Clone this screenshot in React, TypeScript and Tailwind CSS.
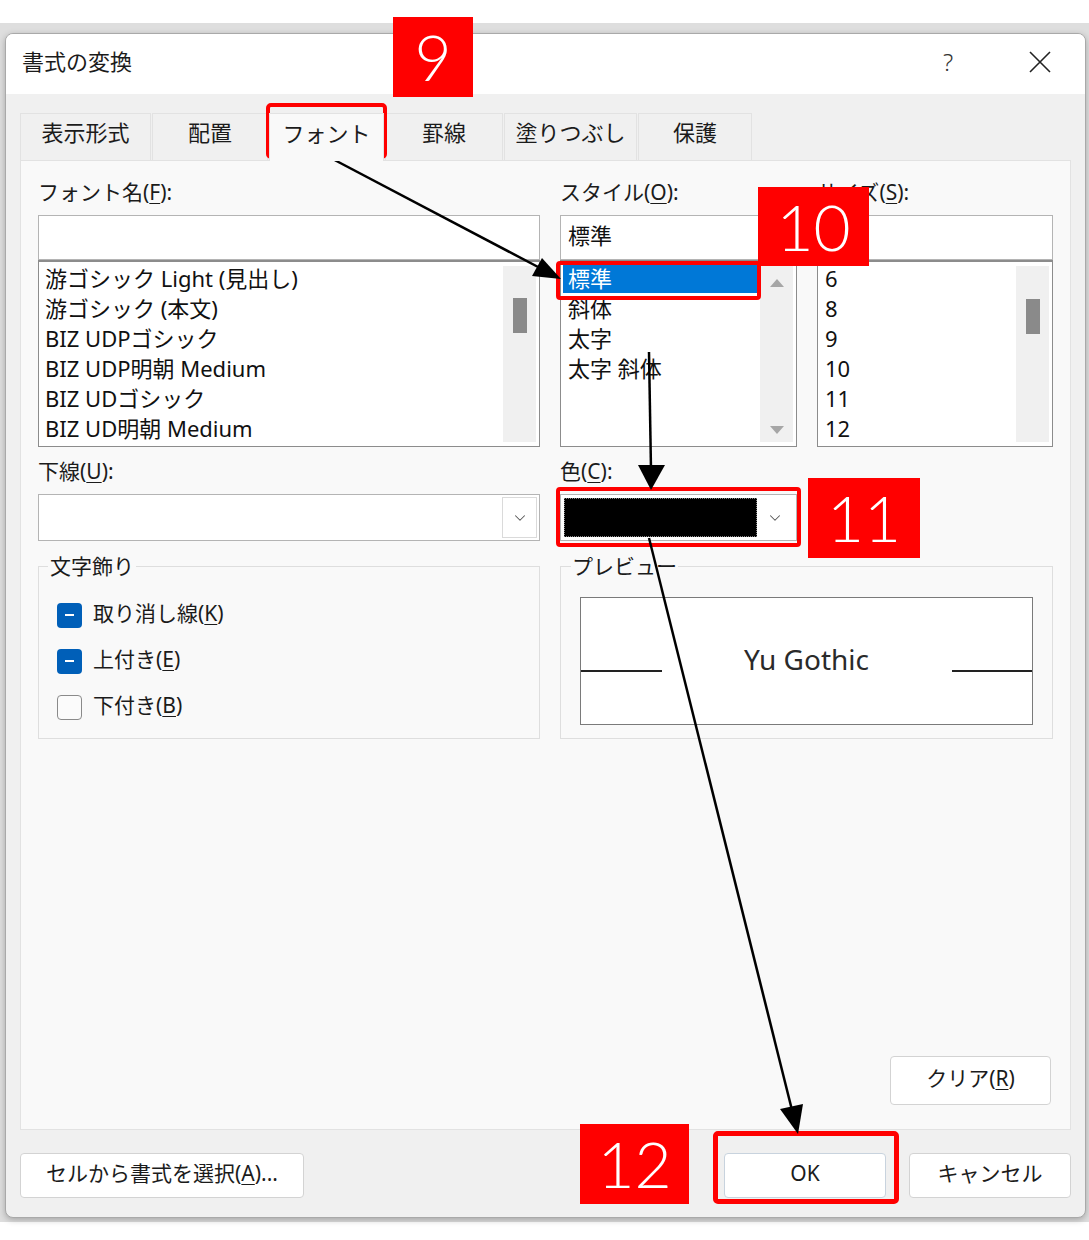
import { ChevronDown } from 'lucide-react';

const FONTS = ['游ゴシック Light (見出し)', '游ゴシック (本文)', 'BIZ UDPゴシック', 'BIZ UDP明朝 Medium', 'BIZ UDゴシック', 'BIZ UD明朝 Medium'];
const STYLES = ['標準', '斜体', '太字', '太字 斜体'];
const SIZES = ['6', '8', '9', '10', '11', '12'];
const TABS: { label: string; w: string; active?: boolean }[] = [
  { label: '表示形式', w: 'w-[131px]' },
  { label: '配置', w: 'w-[116px]' },
  { label: 'フォント', w: 'w-[115px]', active: true },
  { label: '罫線', w: 'w-[118px]' },
  { label: '塗りつぶし', w: 'w-[133px]' },
  { label: '保護', w: 'w-[114px]' },
];

function Key({ k }: { k: string }) {
  return <u className="underline decoration-1 underline-offset-[3px]">{k}</u>;
}

function Label({ text, k }: { text: string; k: string }) {
  return (
    <div className="h-[30px] text-[21px] leading-[28px] text-[#1b1b1b] whitespace-nowrap">
      {text}(<Key k={k} />):
    </div>
  );
}

function Scrollbar({ thumbTop, arrows }: { thumbTop?: string; arrows?: boolean }) {
  return (
    <div className="my-[4px] mr-[3px] flex w-[33px] flex-col items-center bg-[#f0f0f0]">
      {arrows ? (
        <>
          <svg width="16" height="10" viewBox="0 0 16 10" className="mt-[12px]">
            <path d="M1 9 L8 1 L15 9 Z" fill="#a6a6a6" />
          </svg>
          <svg width="16" height="10" viewBox="0 0 16 10" className="mt-auto mb-[7px]">
            <path d="M1 1 L8 9 L15 1 Z" fill="#a6a6a6" />
          </svg>
        </>
      ) : (
        <div className={`${thumbTop} h-[35px] w-[14px] bg-[#8a8a8a]`} />
      )}
    </div>
  );
}

function Checkbox({ checked }: { checked: boolean }) {
  return checked ? (
    <span className="flex size-[25px] items-center justify-center rounded-[4px] bg-[#005fb8]">
      <span className="h-[2px] w-[9px] bg-white" />
    </span>
  ) : (
    <span className="size-[25px] rounded-[4px] border border-[#8a8a8a] bg-[#fbfbfb]" />
  );
}

function Dialog() {
  return (
    <div className="flex h-[1185px] w-[1081px] flex-col overflow-hidden rounded-[8px] border border-[#a9a9a9] bg-[#f0f0f0] shadow-[0_2px_6px_rgba(0,0,0,0.25)]">
      {/* title bar */}
      <div className="flex h-[60px] items-center bg-white pb-[5px] pl-[16px] text-[22px] text-[#1b1b1b]">
        <span>書式の変換</span>
        <span className="ml-auto w-[40px] text-center text-[24px] font-light text-[#333]">?</span>
        <span className="ml-[49px] mr-[22px] flex w-[46px] justify-center">
          <svg width="22" height="22" viewBox="0 0 22 22">
            <path d="M1 1 L21 21 M21 1 L1 21" stroke="#222" strokeWidth="1.6" />
          </svg>
        </span>
      </div>

      <div className="flex flex-1 flex-col px-[14px] pt-[19px]">
        {/* tabs */}
        <div className="flex h-[47px] gap-[1px]">
          {TABS.map((t) => (
            <div
              key={t.label}
              className={`${t.w} relative flex items-center justify-center border border-b-0 border-[#e2e2e2] pb-[9px] text-[22px] text-[#1b1b1b] ${
                t.active ? 'z-10 -mb-px h-[48px] bg-[#f9f9f9]' : 'bg-[#f0f0f0]'
              }`}
            >
              {t.label}
            </div>
          ))}
        </div>

        {/* panel */}
        <div className="flex h-[970px] flex-col border border-[#e2e2e2] bg-[#f9f9f9] px-[17px] pb-[24px] pt-[17px]">
          <div className="grid grid-cols-[502px_237px_236px] gap-x-[20px]">
            {/* font name */}
            <div>
              <Label text="フォント名" k="F" />
              <div className="mt-[7px] h-[45px] border border-[#b4b4b4] bg-white" />
              <div className="flex h-[187px] border border-[#8c8c8c] border-t-2 bg-white">
                <div className="flex-1 pl-[6px] pt-[1px] text-[22px] leading-[30px] text-[#111]">
                  {FONTS.map((f) => (
                    <div key={f} className="h-[30px] whitespace-nowrap">
                      {f}
                    </div>
                  ))}
                </div>
                <Scrollbar thumbTop="mt-[32px]" />
              </div>
            </div>
            {/* style */}
            <div>
              <Label text="スタイル" k="O" />
              <div className="mt-[7px] flex h-[45px] items-center border border-[#b4b4b4] bg-white pb-[4px] pl-[7px] text-[22px] text-[#111]">
                標準
              </div>
              <div className="flex h-[187px] border border-[#8c8c8c] border-t-2 bg-white">
                <div className="flex-1 pl-[2px] pt-[1px] text-[22px] leading-[30px] text-[#111]">
                  {STYLES.map((s, i) => (
                    <div key={s} className={`h-[30px] pl-[5px] ${i === 0 ? 'bg-[#0078d7] text-white' : ''}`}>
                      {s}
                    </div>
                  ))}
                </div>
                <Scrollbar arrows />
              </div>
            </div>
            {/* size */}
            <div>
              <Label text="サイズ" k="S" />
              <div className="mt-[7px] h-[45px] border border-[#b4b4b4] bg-white" />
              <div className="flex h-[187px] border border-[#8c8c8c] border-t-2 bg-white">
                <div className="flex-1 pl-[7px] pt-[1px] text-[22px] leading-[30px] text-[#111]">
                  {SIZES.map((s) => (
                    <div key={s} className="h-[30px]">
                      {s}
                    </div>
                  ))}
                </div>
                <Scrollbar thumbTop="mt-[33px]" />
              </div>
            </div>

            {/* underline */}
            <div className="mt-[10px]">
              <Label text="下線" k="U" />
              <div className="mt-[7px] flex h-[47px] border border-[#b4b4b4] bg-white p-[2px]">
                <div className="ml-auto flex w-[35px] items-center justify-center border border-[#dadada]">
                  <ChevronDown size={18} strokeWidth={1.4} color="#555" />
                </div>
              </div>
            </div>
            {/* colour */}
            <div className="mt-[10px]">
              <Label text="色" k="C" />
              <div className="mt-[7px] flex h-[47px] border border-[#b4b4b4] bg-white p-[3px]">
                <div className="flex-1 border border-dotted border-[#888] bg-black" />
                <div className="flex w-[36px] items-center justify-center">
                  <ChevronDown size={18} strokeWidth={1.4} color="#555" />
                </div>
              </div>
            </div>
            <div />

            {/* effects */}
            <fieldset className="mt-[11px] h-[187px] border border-[#dedede]">
              <legend className="ml-[9px] px-[2px] text-[21px] leading-[28px] text-[#1b1b1b]">文字飾り</legend>
              <div className="flex flex-col px-[18px] pt-[12px] text-[21px] text-[#1b1b1b]">
                {[
                  { t: '取り消し線', k: 'K', c: true },
                  { t: '上付き', k: 'E', c: true },
                  { t: '下付き', k: 'B', c: false },
                ].map((r) => (
                  <div key={r.t} className="flex h-[46px] items-center gap-[11px]">
                    <Checkbox checked={r.c} />
                    <span className="pb-[2px]">
                      {r.t}(<Key k={r.k} />)
                    </span>
                  </div>
                ))}
              </div>
            </fieldset>

            {/* preview */}
            <fieldset className="col-span-2 mt-[11px] h-[187px] border border-[#dedede]">
              <legend className="ml-[10px] px-[1px] text-[21px] leading-[28px] text-[#1b1b1b]">プレビュー</legend>
              <div className="relative mx-[19px] mt-[17px] flex h-[128px] items-center justify-center border border-[#7a7a7a] bg-white pb-[4px] text-[28px] text-[#2a2a2a]">
                Yu Gothic
                <span className="absolute left-0 top-[72px] h-[1.5px] w-[81px] bg-[#222]" />
                <span className="absolute right-0 top-[72px] h-[1.5px] w-[80px] bg-[#222]" />
              </div>
            </fieldset>
          </div>

          <button
            type="button"
            className="mr-[2px] mt-auto h-[49px] w-[161px] self-end rounded-[4px] border border-[#d3d3d3] bg-white pb-[3px] text-[21px] text-[#1b1b1b]"
          >
            クリア(<Key k="R" />)
          </button>
        </div>

        {/* bottom buttons */}
        <div className="mt-[23px] flex h-[45px] gap-[23px]">
          <button type="button" className="w-[284px] rounded-[4px] border border-[#d3d3d3] bg-white pb-[3px] text-[21px] text-[#1b1b1b]">
            セルから書式を選択(<Key k="A" />)...
          </button>
          <button type="button" className="ml-auto w-[162px] rounded-[4px] border border-[#c8d3de] bg-white pb-[3px] text-[21px] text-[#1b1b1b]">
            OK
          </button>
          <button type="button" className="w-[162px] rounded-[4px] border border-[#d3d3d3] bg-white pb-[3px] text-[21px] text-[#1b1b1b]">
            キャンセル
          </button>
        </div>
      </div>
    </div>
  );
}

function Badge({ n, pos }: { n: string; pos: string }) {
  return (
    <div className={`absolute flex items-center justify-center bg-[#ff0000] font-['Lato',sans-serif] text-[64px] font-light leading-none text-white ${pos}`}>
      {n}
    </div>
  );
}

export default function App() {
  return (
    <div className="relative h-[1240px] w-[1089px] overflow-hidden bg-white font-['Noto_Sans','Noto_Sans_CJK_JP',sans-serif]">
      <div className="mt-[23px] h-[1199px] bg-[#dedede] pl-[5px] pt-[10px]">
        <Dialog />
      </div>

      {/* annotations */}
      <div className="absolute left-[266px] top-[103px] h-[56px] w-[121px] rounded-[5px] border-4 border-[#ff0000]" />
      <div className="absolute left-[556px] top-[261px] h-[39px] w-[205px] rounded-[4px] border-4 border-[#ff0000]" />
      <div className="absolute left-[556px] top-[487px] h-[60px] w-[245px] rounded-[4px] border-4 border-[#ff0000]" />
      <div className="absolute left-[713px] top-[1131px] h-[73px] w-[186px] rounded-[5px] border-[5px] border-[#ff0000]" />

      <Badge n="9" pos="left-[393px] top-[17px] h-[80px] w-[80px]" />
      <Badge n="10" pos="left-[758px] top-[187px] h-[79px] w-[111px]" />
      <Badge n="11" pos="left-[808px] top-[478px] h-[80px] w-[112px]" />
      <Badge n="12" pos="left-[580px] top-[1124px] h-[80px] w-[109px]" />

      <svg className="pointer-events-none absolute left-0 top-0" width="1089" height="1240">
        <line x1="327" y1="156" x2="540" y2="268" stroke="#000" strokeWidth="2.5" />
        <polygon points="561,279 532,276 542,258" fill="#000" />
        <line x1="649" y1="352" x2="651" y2="470" stroke="#000" strokeWidth="2.5" />
        <polygon points="651,490 638,465 665,465" fill="#000" />
        <line x1="649" y1="538" x2="792" y2="1110" stroke="#000" strokeWidth="2.5" />
        <polygon points="798,1134 780,1109 803,1104" fill="#000" />
      </svg>
    </div>
  );
}
